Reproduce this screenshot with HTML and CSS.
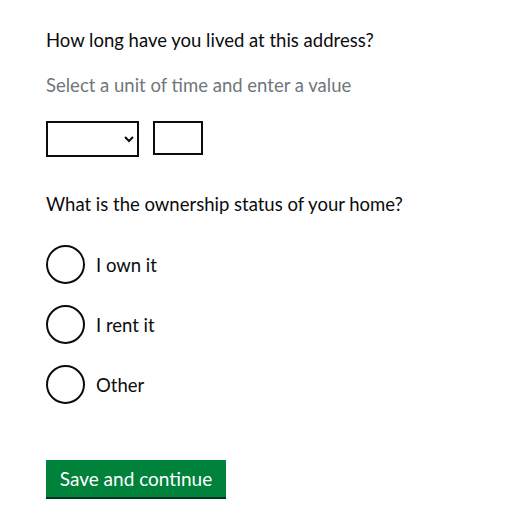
FILE: index.html
```html
<!DOCTYPE html>
<html lang="en">
<head>
<meta charset="utf-8">
<title>Address details</title>
<link rel="stylesheet" href="styles.css">
</head>
<body>
<form class="page">
  <div class="group">
    <label class="label" for="unit">How long have you lived at this address?</label>
    <div class="hint">Select a unit of time and enter a value</div>
    <div class="inputs">
      <select id="unit" class="select">
        <option></option>
        <option>Years</option>
        <option>Months</option>
      </select>
      <input class="input" type="text" aria-label="Value">
    </div>
  </div>
  <fieldset class="fieldset">
    <legend class="legend">What is the ownership status of your home?</legend>
    <div class="radios">
      <label class="radio"><span class="circle"></span><span class="radio-label">I own it</span></label>
      <label class="radio"><span class="circle"></span><span class="radio-label">I rent it</span></label>
      <label class="radio"><span class="circle"></span><span class="radio-label">Other</span></label>
    </div>
  </fieldset>
  <button class="button" type="button">Save and continue</button>
</form>
</body>
</html>
```

FILE: styles.css
```css
html, body {
  margin: 0;
  padding: 0;
  background: #ffffff;
}
body {
  font-family: Lato, "Liberation Sans", Arial, sans-serif;
  font-size: 18.5px;
  line-height: 25px;
  color: #0b0c0c;
}
.page {
  padding: 28px 46px 20px;
  display: flex;
  flex-direction: column;
  align-items: flex-start;
}
.group {
  display: flex;
  flex-direction: column;
  align-items: flex-start;
}
.label {
  display: block;
}
.hint {
  margin-top: 20px;
  color: #6f777b;
}
.inputs {
  margin-top: 23px;
  display: flex;
  gap: 14px;
  align-items: flex-start;
}
.select {
  width: 93px;
  height: 36px;
  border: 2px solid #0b0c0c;
  border-radius: 0;
  background: #ffffff;
  font-family: inherit;
  font-size: 19px;
  color: #0b0c0c;
  box-sizing: border-box;
  margin: 0;
}
.input {
  width: 50px;
  height: 34px;
  border: 2px solid #0b0c0c;
  border-radius: 0;
  box-sizing: border-box;
  margin: 0;
  padding: 0 4px;
  font-family: inherit;
  font-size: 19px;
}
.fieldset {
  border: 0;
  margin: 35px 0 0;
  padding: 0;
  min-width: 0;
}
.legend {
  padding: 0;
}
.radios {
  margin-top: 27px;
  display: flex;
  flex-direction: column;
  gap: 20px;
}
.radio {
  display: flex;
  align-items: center;
  height: 40px;
  gap: 11px;
  cursor: pointer;
}
.circle {
  width: 39px;
  height: 39px;
  border: 2px solid #0b0c0c;
  border-radius: 50%;
  box-sizing: border-box;
  background: #ffffff;
}
.radio-label {
  line-height: 25px;
  padding-top: 2px;
}
.button {
  margin-top: 56px;
  width: 180px;
  height: 37px;
  padding: 0;
  border: 0;
  border-radius: 0;
  background: #00823b;
  box-shadow: 0 2px 0 #003618;
  color: #ffffff;
  font-family: inherit;
  font-size: 19px;
  line-height: 25px;
  text-align: center;
  cursor: pointer;
}
```
